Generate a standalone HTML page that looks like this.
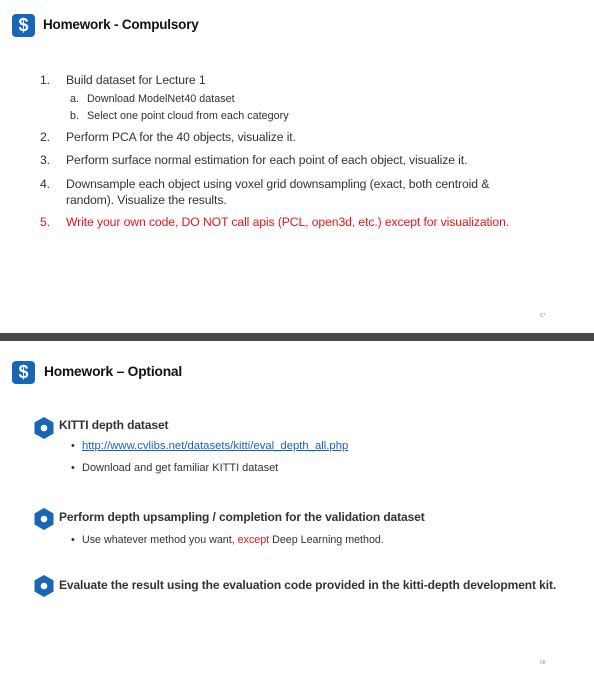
<!DOCTYPE html>
<html><head><meta charset="utf-8"><style>
body{margin:0;width:594px;height:677px;background:#fff;position:relative;font-family:"Liberation Sans",sans-serif;color:#333;overflow:hidden}
.a{position:absolute;white-space:nowrap}
.t{font-weight:bold;font-size:13.5px;color:#111;letter-spacing:-0.2px}
.i{font-size:12.2px;letter-spacing:-0.1px}
.s{font-size:10.8px}
.s2{font-size:11px}
.b{font-weight:bold;font-size:12px;color:#333;letter-spacing:-0.1px}
.r{color:#e8141c}
.logo{position:absolute;width:23px;height:23px;background:#1766b8;border-radius:4px;color:#fff;font-weight:bold;font-size:18px;text-align:center;line-height:23px}
</style></head><body>
<div class="logo" style="left:12px;top:14px">$</div>
<div class="a t" style="left:43px;top:17px">Homework - Compulsory</div>
<div class="a i" style="left:40px;top:73px">1.</div><div class="a i" style="left:66px;top:73px">Build dataset for Lecture 1</div>
<div class="a s" style="left:70px;top:93px">a.</div><div class="a s" style="left:87px;top:93px">Download ModelNet40 dataset</div>
<div class="a s" style="left:70px;top:110px">b.</div><div class="a s" style="left:87px;top:110px">Select one point cloud from each category</div>
<div class="a i" style="left:40px;top:130px">2.</div><div class="a i" style="left:66px;top:130px">Perform PCA for the 40 objects, visualize it.</div>
<div class="a i" style="left:40px;top:153px">3.</div><div class="a i" style="left:66px;top:153px">Perform surface normal estimation for each point of each object, visualize it.</div>
<div class="a i" style="left:40px;top:177px">4.</div><div class="a i" style="left:66px;top:177px">Downsample each object using voxel grid downsampling (exact, both centroid &amp;</div>
<div class="a i" style="left:66px;top:193px">random). Visualize the results.</div>
<div class="a i r" style="left:40px;top:215px">5.</div><div class="a i r" style="left:66px;top:215px">Write your own code, DO NOT call apis (PCL, open3d, etc.) except for visualization.</div>
<div class="a" style="left:540px;top:313px;font-size:5px;color:#999">67</div>
<div style="position:absolute;left:0;top:333px;width:594px;height:8px;background:#484848"></div>
<div class="logo" style="left:12px;top:361px">$</div>
<div class="a t" style="left:44px;top:364px;font-size:13.8px">Homework – Optional</div>
<svg style="position:absolute;left:34px;top:417px" width="20" height="22" viewBox="0 0 20 22"><polygon points="10,0 19.5,5.5 19.5,16.5 10,22 0.5,16.5 0.5,5.5" fill="#1766b8"/><circle cx="10" cy="11" r="3.3" fill="#fff"/></svg>
<div class="a b" style="left:59px;top:418px">KITTI depth dataset</div>
<div class="a s2" style="left:71px;top:440px">•</div><div class="a s2" style="left:82px;top:440px;color:#1a5fc8;text-decoration:underline;font-size:11.3px">http://www.cvlibs.net/datasets/kitti/eval_depth_all.php</div>
<div class="a s2" style="left:71px;top:462px">•</div><div class="a s2" style="left:82px;top:462px">Download and get familiar KITTI dataset</div>
<svg style="position:absolute;left:34px;top:508px" width="20" height="22" viewBox="0 0 20 22"><polygon points="10,0 19.5,5.5 19.5,16.5 10,22 0.5,16.5 0.5,5.5" fill="#1766b8"/><circle cx="10" cy="11" r="3.3" fill="#fff"/></svg>
<div class="a b" style="left:59px;top:510px">Perform depth upsampling / completion for the validation dataset</div>
<div class="a s2" style="left:71px;top:534px">•</div><div class="a s2" style="left:82px;top:534px;font-size:10.7px">Use whatever method you want, <span class="r">except</span> Deep Learning method.</div>
<svg style="position:absolute;left:34px;top:575px" width="20" height="22" viewBox="0 0 20 22"><polygon points="10,0 19.5,5.5 19.5,16.5 10,22 0.5,16.5 0.5,5.5" fill="#1766b8"/><circle cx="10" cy="11" r="3.3" fill="#fff"/></svg>
<div class="a b" style="left:59px;top:578px">Evaluate the result using the evaluation code provided in the kitti-depth development kit.</div>
<div class="a" style="left:540px;top:660px;font-size:5px;color:#999">68</div>
</body></html>
